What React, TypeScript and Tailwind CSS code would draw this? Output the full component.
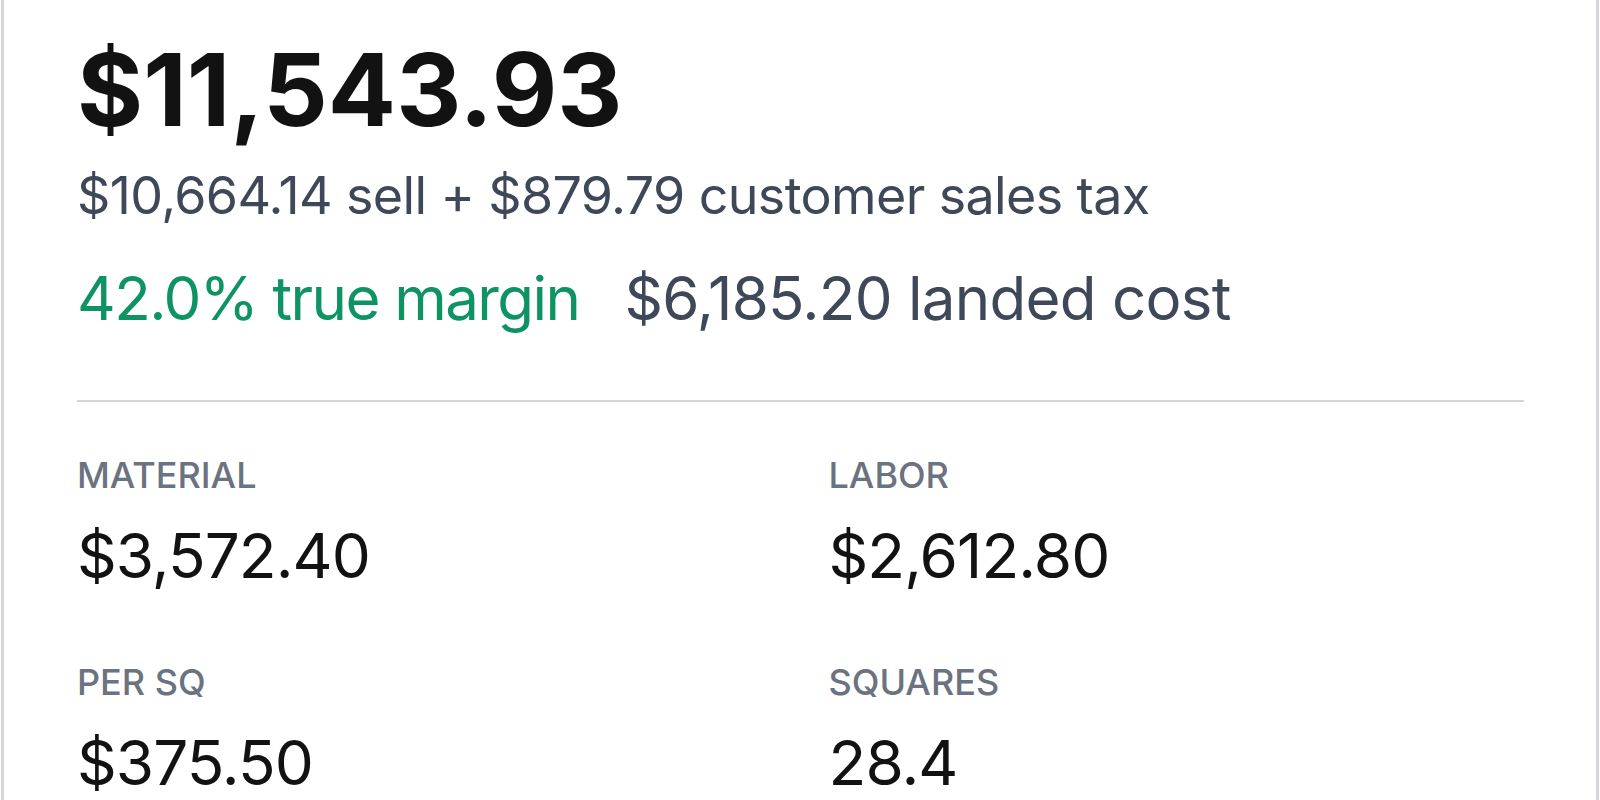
const STATS = [
  { label: "MATERIAL", value: "$3,572.40" },
  { label: "LABOR", value: "$2,612.80" },
  { label: "PER SQ", value: "$375.50" },
  { label: "SQUARES", value: "28.4" },
];

export default function App() {
  return (
    <div className="h-[800px] w-full overflow-hidden bg-white" style={{ fontFamily: "Inter, 'Liberation Sans', sans-serif" }}>
      <div className="mx-[1px] h-full border-x-[3px] border-[#d5d7dd] pl-[73px] pr-[72px] pt-[39px]">
        {/* Total */}
        <div className="text-[101px] font-bold leading-none text-[#121212]">$11,543.93</div>
        <div className="mt-[30px] text-[52px] leading-none tracking-[-0.012em] text-[#3f4858]">
          $10,664.14 sell + $879.79 customer sales tax
        </div>
        <div className="mt-[46px] flex gap-[45px] text-[60px] leading-none">
          <span className="tracking-[-0.026em] text-[#0e9463]">42.0% true margin</span>
          <span className="tracking-[-0.012em] text-[#3f4858]">$6,185.20 landed cost</span>
        </div>

        <div className="mt-[72px] h-[2px] bg-[#d4d5dc]" />

        {/* Breakdown */}
        <div className="mt-[55px] grid grid-cols-2 gap-x-[56px] gap-y-[77px]">
          {STATS.map((s) => (
            <div key={s.label} className="flex flex-col gap-[32px]">
              <div className="text-[36px] font-medium leading-none text-[#6b7280]">{s.label}</div>
              <div className="text-[62px] leading-none tracking-[-0.015em] text-[#121212]">{s.value}</div>
            </div>
          ))}
        </div>
      </div>
    </div>
  );
}
